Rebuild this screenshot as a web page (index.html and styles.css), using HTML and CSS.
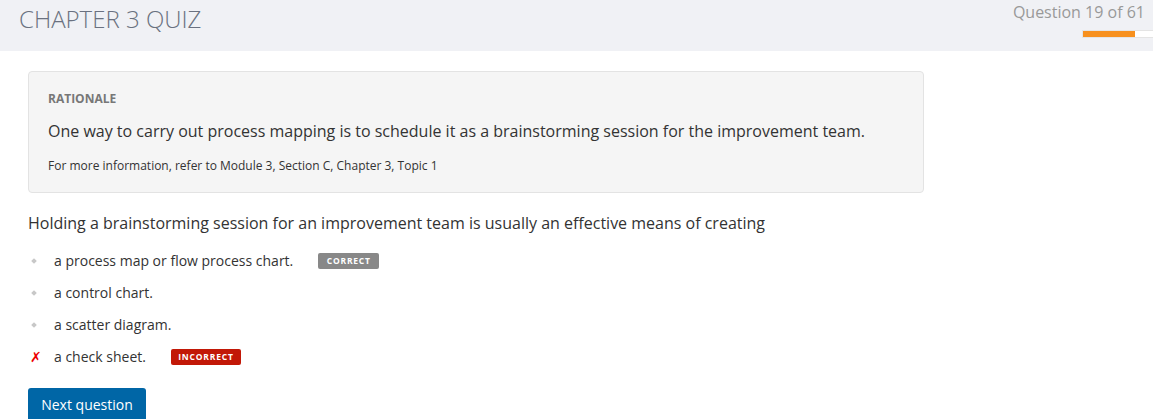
FILE: index.html
```html
<!DOCTYPE html>
<html>
<head>
<meta charset="utf-8">
<link rel="stylesheet" href="styles.css">
</head>
<body>
<header class="header">
  <h1 class="title">CHAPTER 3 QUIZ</h1>
  <div class="progress-area">
    <div class="counter">Question 19 of 61</div>
    <div class="bar"><div class="bar-fill" style="width: 74%"></div></div>
  </div>
</header>
<main class="main">
  <section class="rationale">
    <div class="rat-label">RATIONALE</div>
    <p class="rat-text">One way to carry out process mapping is to schedule it as a brainstorming session for the improvement team.</p>
    <p class="rat-ref">For more information, refer to Module 3, Section C, Chapter 3, Topic 1</p>
  </section>
  <p class="question">Holding a brainstorming session for an improvement team is usually an effective means of creating</p>
  <ul class="options">
    <li class="option"><span class="mark"><span class="dot"></span></span><span class="opt-text">a process map or flow process chart.</span><span class="badge badge-correct">CORRECT</span></li>
    <li class="option"><span class="mark"><span class="dot"></span></span><span class="opt-text">a control chart.</span></li>
    <li class="option"><span class="mark"><span class="dot"></span></span><span class="opt-text">a scatter diagram.</span></li>
    <li class="option"><span class="mark"><span class="cross">✗</span></span><span class="opt-text">a check sheet.</span><span class="badge badge-incorrect">INCORRECT</span></li>
  </ul>
  <button class="next">Next question</button>
</main>
</body>
</html>
```
FILE: styles.css
```css
* { box-sizing: border-box; }
html, body { margin: 0; padding: 0; }
body {
  font-family: "Open Sans", "Liberation Sans", sans-serif;
  background: #fff;
  color: #333;
  overflow: hidden;
}
.header {
  height: 51px;
  background: #f0f1f5;
  display: flex;
  justify-content: space-between;
  align-items: flex-start;
}
.title {
  margin: 0;
  padding: 3px 0 0 19px;
  font-size: 24px;
  font-weight: 300;
  color: #6a7180;
  line-height: 32px;
}
.progress-area {
  display: flex;
  flex-direction: column;
  align-items: flex-end;
  padding-top: 1px;
}
.counter {
  font-size: 16px;
  color: #999;
  line-height: 22px;
  padding-right: 8px;
}
.bar {
  margin-top: 7px;
  width: 71px;
  height: 8px;
  background: #fff;
  border: 1px solid #e4e4e4;
  border-right: none;
}
.bar-fill {
  height: 100%;
  background: #f7901e;
}
.main {
  padding: 20px 28px 0 28px;
}
.rationale {
  width: 896px;
  background: #f5f5f5;
  border: 1px solid #e3e3e3;
  border-radius: 4px;
  padding: 18px 19px 18px 19px;
}
.rat-label {
  font-size: 12px;
  font-weight: 700;
  color: #777;
  line-height: 17px;
}
.rat-text {
  margin: 13px 0 0 0;
  font-size: 16px;
  line-height: 22px;
  color: #333;
}
.rat-ref {
  margin: 15px 0 0 0;
  font-size: 12px;
  line-height: 17px;
  color: #333;
}
.question {
  margin: 19px 0 0 0;
  font-size: 16px;
  line-height: 23px;
  color: #333;
}
.options {
  list-style: none;
  margin: 16px 0 0 0;
  padding: 0;
}
.option {
  display: flex;
  align-items: center;
  height: 20px;
  margin-bottom: 12px;
  font-size: 14px;
  color: #333;
}
.mark {
  width: 26px;
  display: flex;
  align-items: center;
  padding-left: 4px;
}
.dot {
  width: 4px;
  height: 4px;
  background: #c8c8c8;
  transform: rotate(45deg);
  display: block;
}
.cross {
  color: #e00;
  font-size: 14px;
  font-weight: 700;
  font-family: "DejaVu Sans", sans-serif;
  margin-left: -2px;
  line-height: 1;
}
.opt-text { line-height: 20px; }
.badge {
  display: inline-block;
  font-size: 8.5px;
  font-weight: 700;
  letter-spacing: 0.8px;
  color: #fff;
  height: 16px;
  line-height: 16px;
  border-radius: 2px;
  margin-left: 25px;
  text-align: center;
}
.badge-correct {
  background: #888;
  width: 61px;
}
.badge-incorrect {
  background: #c21807;
  width: 70px;
}
.next {
  margin-top: 9px;
  font-family: "Open Sans", "Liberation Sans", sans-serif;
  font-size: 14px;
  color: #fff;
  background: #0066a6;
  border: none;
  border-radius: 3px;
  width: 118px;
  height: 34px;
  padding: 0;
  line-height: 34px;
}
```
